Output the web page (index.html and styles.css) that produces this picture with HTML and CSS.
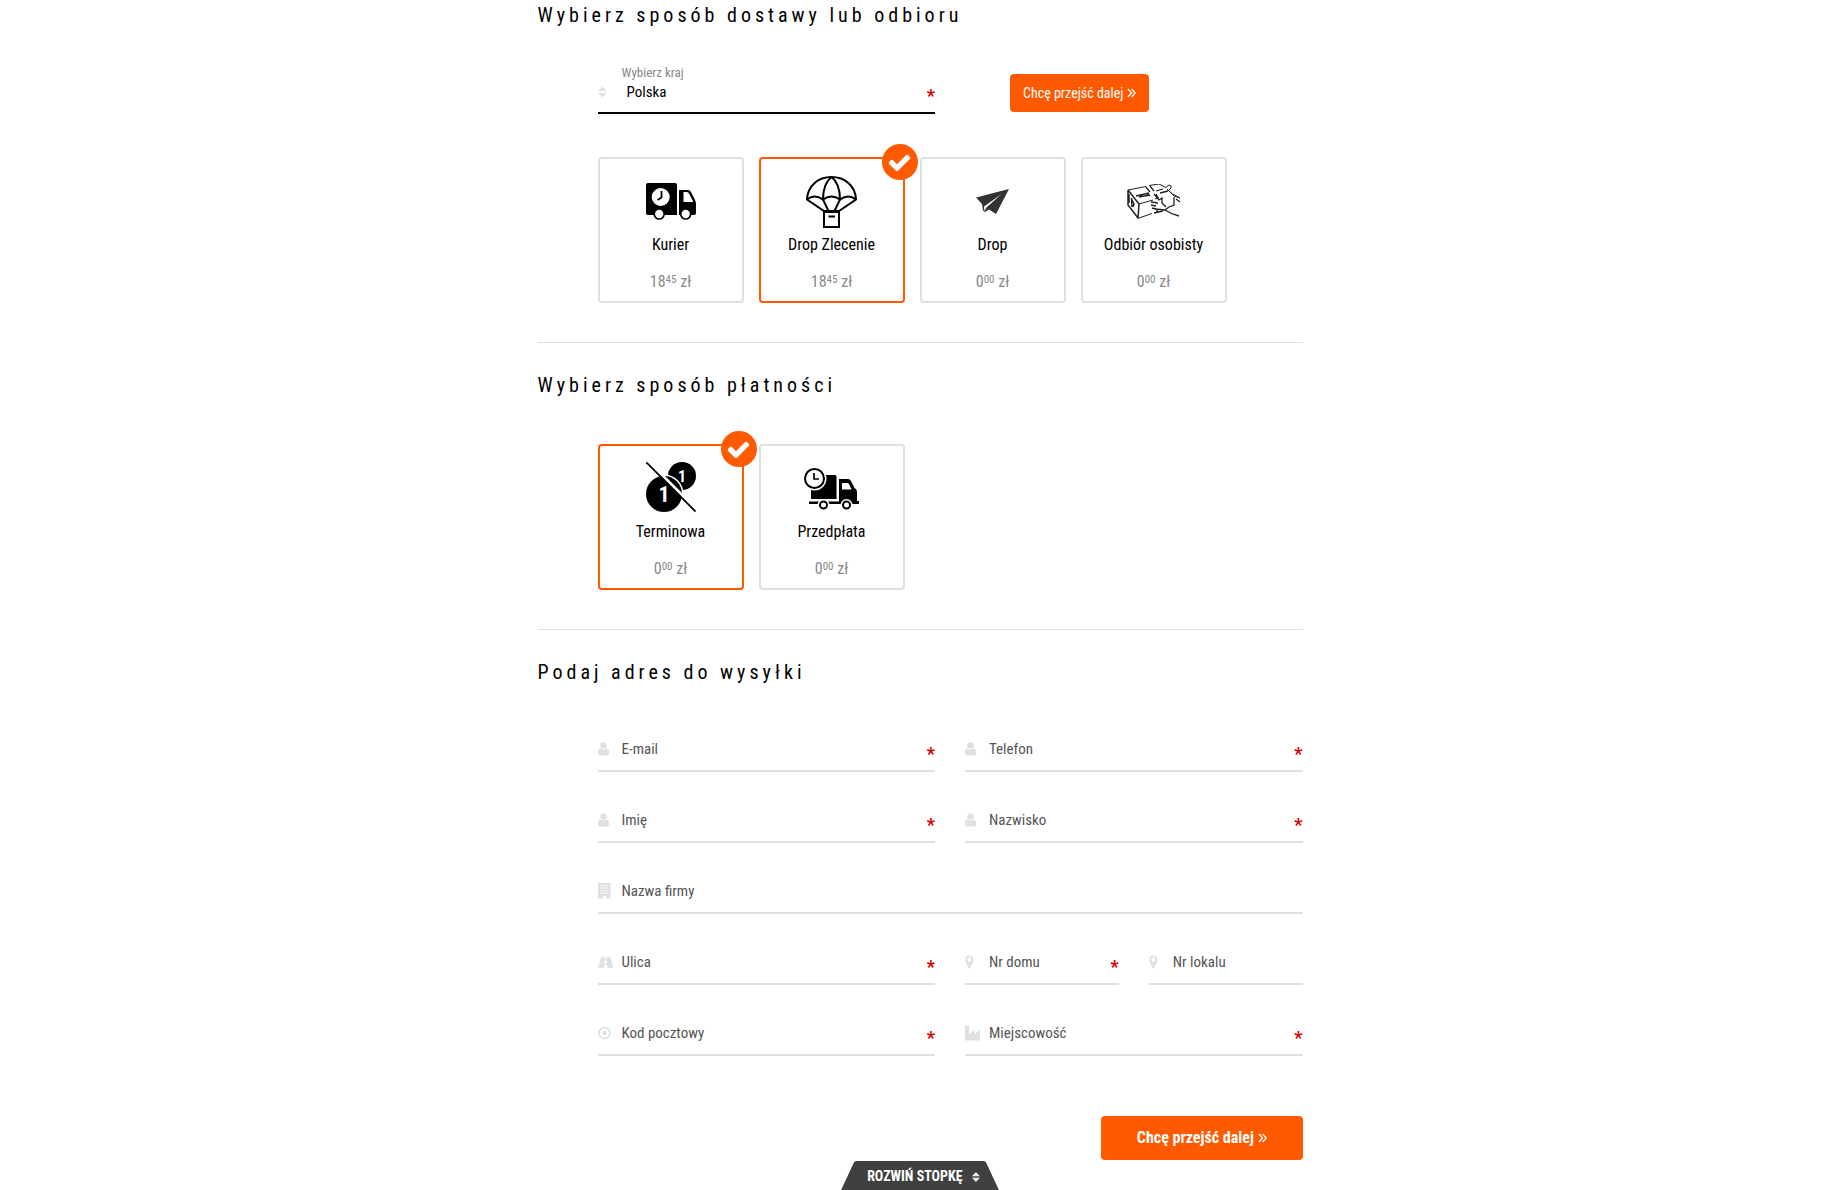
FILE: index.html
```
<!DOCTYPE html>
<html lang="pl">
<head>
  <meta charset="UTF-8">
  <meta name="viewport" content="width=device-width, initial-scale=1.0">
  <title>Zamówienie - dostawa i płatność</title>
  <link rel="stylesheet" href="styles.css">
</head>
<body>

  <!-- shared field icons -->
  <svg class="sprite" aria-hidden="true">
    <symbol id="i-user" viewBox="0 0 16 16"><path d="M2.200 4.500a3.300 3.300 0 1 1 6.600 0 3.300 3.300 0 0 1-6.600 0zM2.500 7.500q3 1.800 6 0 2.500.2 2.500 3.500v1q0 2.500-2 2.500H2q-2 0-2-2.500v-1q0-3.300 2.500-3.500z"/></symbol>
    <symbol id="i-sort" viewBox="0 0 16 16"><path d="M4.500 3L8.300 6.700H.7zM4.500 13L8.300 9.300H.7z" stroke="currentColor" stroke-width=".8" stroke-linejoin="round"/></symbol>
    <symbol id="i-building" viewBox="0 0 16 16"><path fill-rule="evenodd" d="M1 0h11q.5 0 .5.500v15H8v-2.500H5v2.500H0V.500Q0 0 .5 0zM2.500 2v1.200h1.200V2zm2.200 0v1.200h1.200V2zm2.200 0v1.200h1.200V2zm2.200 0v1.200h1.200V2zM2.500 4.500v1.200h1.200V4.500zm2.200 0v1.200h1.200V4.500zm2.200 0v1.200h1.200V4.500zm2.200 0v1.200h1.200V4.500zM2.500 7v1.200h1.200V7zm2.200 0v1.200h1.200V7zm2.200 0v1.200h1.200V7zm2.200 0v1.200h1.200V7zM2.500 9.500v1.200h1.200V9.500zm2.200 0v1.200h1.200V9.500zm2.200 0v1.200h1.200V9.500zm2.200 0v1.200h1.200V9.500z"/></symbol>
    <symbol id="i-road" viewBox="0 0 16 16"><path d="M3.800 3h3L6.600 5h2.200L8.600 3h3q.6 0 .8.600L15.400 13q.2.800-.5.800H9.300l-.2-3.300H6.300l-.2 3.300H.6q-.8 0-.5-.8L3 3.600Q3.200 3 3.800 3zM6.500 6.500l-.2 2.500h2.800L8.900 6.500z"/></symbol>
    <symbol id="i-target" viewBox="0 0 16 16"><circle cx="6.500" cy="8" r="5.500" fill="none" stroke="currentColor" stroke-width="1.600"/><circle cx="6.500" cy="8" r="2.200"/></symbol>
    <symbol id="i-marker" viewBox="0 0 16 16"><path fill-rule="evenodd" d="M4.300 1.500a4.200 4.200 0 0 1 4.200 4.200q0 1-.5 2L5.200 14q-.9 1.300-1.800 0L.6 7.700q-.5-1-.5-2a4.200 4.200 0 0 1 4.200-4.200zm0 2.100a2.100 2.100 0 1 0 0 4.200 2.100 2.100 0 0 0 0-4.200z"/></symbol>
    <symbol id="i-industry" viewBox="0 0 16 16"><path d="M0 .5h4v8.700l5.500-4.500v4.500L15 4.700v10.800H0z"/></symbol>
    <symbol id="i-angles" viewBox="0 0 9 12"><path d="M1 2l3.500 4L1 10M4.700 2l3.500 4-3.500 4" fill="none" stroke="currentColor" stroke-width="1.300"/></symbol>
    <symbol id="i-check" viewBox="0 0 1792 1792"><path d="M1671 566q0 40-28 68l-724 724-136 136q-28 28-68 28t-68-28l-136-136-362-362q-28-28-28-68t28-68l136-136q28-28 68-28t68 28l294 295 656-657q28-28 68-28t68 28l136 136q28 28 28 68z"/></symbol>
  </svg>

  <form class="order">

    <section class="step">
      <h2>Wybierz sposób dostawy lub odbioru</h2>
      <div class="country-row">
        <div class="country">
          <label for="kraj">Wybierz kraj</label>
          <div class="country-value">
            <svg class="field-icon"><use href="#i-sort"/></svg>
            <select id="kraj" name="kraj">
              <option>Polska</option>
              <option>Czechy</option>
              <option>Niemcy</option>
            </select>
            <span class="req">*</span>
          </div>
        </div>
        <button type="button" class="btn btn-small">Chcę przejść dalej <svg class="angles"><use href="#i-angles"/></svg></button>
      </div>

      <div class="cards">
        <label class="card">
          <input type="radio" name="dostawa" value="kurier">
          <span class="card-icon">
            <svg width="50" height="37" viewBox="0 0 50 37">
              <path d="M2 0h27q2 0 2 2v30H2q-2 0-2-2V2q0-2 2-2z"/>
              <circle cx="14.700" cy="14" r="9" fill="#fff"/>
              <path d="M15.500 8v6.500L11.500 17" fill="none" stroke="#000" stroke-width="1.800"/>
              <path fill-rule="evenodd" d="M33 7h9q2 0 3 2l4 8q1 2 1 4v9q0 2-2 2H33zm4.500 2v10H47q0-1-.6-2L43 10.500Q42.200 9 41 9z"/>
              <circle cx="13.200" cy="31" r="5" fill="#fff" stroke="#000" stroke-width="1.700"/>
              <circle cx="39.700" cy="31" r="5" fill="#fff" stroke="#000" stroke-width="1.700"/>
            </svg>
          </span>
          <span class="card-name">Kurier</span>
          <span class="card-price">18<sup>45</sup> zł</span>
          <svg class="badge" viewBox="0 0 36 36"><use href="#i-check" x="5" y="6" width="25" height="25"/></svg>
        </label>

        <label class="card">
          <input type="radio" name="dostawa" value="drop-zlecenie" checked>
          <span class="card-icon">
            <svg width="51" height="52" viewBox="0 0 51 52" fill="none" stroke="#000" stroke-width="2">
              <path d="M1 23.500C1.500 10 12 1 25.500 1S49.500 10 50 23.500L33 35H18z"/>
              <path d="M1 23.500q7.500-6 16 0 8.500-6 17 0 8.500-6 16 0"/>
              <path d="M25.500 1C19 6 17 14 17 23.500L22.500 35M25.500 1C32 6 34 14 34 23.500L28.500 35"/>
              <path d="M18 36h15v15H18zM22.500 40.500h6.500"/>
            </svg>
          </span>
          <span class="card-name">Drop Zlecenie</span>
          <span class="card-price">18<sup>45</sup> zł</span>
          <svg class="badge" viewBox="0 0 36 36"><use href="#i-check" x="5" y="6" width="25" height="25"/></svg>
        </label>

        <label class="card">
          <input type="radio" name="dostawa" value="drop">
          <span class="card-icon">
            <svg width="33" height="25" viewBox="0 0 33 25">
              <path fill="#333" d="M0 8.500L33 0 20 25l-7-4.500-4 2.500L7 21.500 6 15z"/>
              <path fill="#fff" d="M25 5.500L8 17.500l.5 4.500 2-3.500z"/>
            </svg>
          </span>
          <span class="card-name">Drop</span>
          <span class="card-price">0<sup>00</sup> zł</span>
          <svg class="badge" viewBox="0 0 36 36"><use href="#i-check" x="5" y="6" width="25" height="25"/></svg>
        </label>

        <label class="card">
          <input type="radio" name="dostawa" value="odbior">
          <span class="card-icon">
            <svg width="53" height="35" viewBox="0 0 53 35" fill="none" stroke="#222" stroke-width="1">
              <path d="M1 6v15l10 13 1-14L1 6M4.500 14l.5 9M5 16l2 4-1 3M2 10v9" stroke-width="1.500"/>
              <path d="M1 6l18-3.500M22 1.500L32 0l6 3M12 20l14-4M12 34l13-4.500M28 15l4-1.500M40 5l6 6"/>
              <path d="M9 12l13-3M12 13l11-2M13 11l3 2M19 9l4 3M19 3l4 5M23 2l4 5M33 9l8-2M29 7l7-2" stroke-width="1.300"/>
              <path d="M38 4l4-3q3 0 2 3l-3 3M42 7q3 2 5 5l6 2M46 10l7 4"/>
              <path d="M27 10l5 6 3-2v5l4 4M24 18l7 1M24 21l5 1M25 24l4 1M31 14l-2-4M27 29l9-2M30 26v3" stroke-width="1.300"/>
              <path d="M47 13v8l-5 2-4 3q6 4 14 6M49 15l4 3M28 25l10 1" stroke-width="1.300"/>
            </svg>
          </span>
          <span class="card-name">Odbiór osobisty</span>
          <span class="card-price">0<sup>00</sup> zł</span>
          <svg class="badge" viewBox="0 0 36 36"><use href="#i-check" x="5" y="6" width="25" height="25"/></svg>
        </label>
      </div>
    </section>

    <section class="step">
      <h2>Wybierz sposób płatności</h2>
      <div class="cards">
        <label class="card">
          <input type="radio" name="platnosc" value="terminowa" checked>
          <span class="card-icon">
            <svg class="coins" width="50" height="54" viewBox="0 0 50 54">
              <circle cx="36" cy="14" r="14"/>
              <circle cx="18" cy="32" r="19.500" fill="#fff"/>
              <circle cx="18" cy="32" r="18"/>
              <text x="36" y="20" font-size="16">1</text>
              <text x="18" y="40" font-size="22">1</text>
              <path d="M2 -1L51 48" stroke="#fff" stroke-width="3"/>
              <path d="M.5.500l49 49" stroke="#000" stroke-width="1.800"/>
            </svg>
          </span>
          <span class="card-name">Terminowa</span>
          <span class="card-price">0<sup>00</sup> zł</span>
          <svg class="badge" viewBox="0 0 36 36"><use href="#i-check" x="5" y="6" width="25" height="25"/></svg>
        </label>

        <label class="card">
          <input type="radio" name="platnosc" value="przedplata">
          <span class="card-icon">
            <svg width="55" height="42" viewBox="0 0 55 42">
              <path d="M7 7h24q1.500 0 1.500 1.500V31H7z"/>
              <circle cx="10.500" cy="10.500" r="12" fill="#fff"/>
              <circle cx="10.500" cy="10.500" r="9.500" fill="#fff" stroke="#000" stroke-width="2"/>
              <path d="M10 5v6h5" fill="none" stroke="#000" stroke-width="1.700"/>
              <path fill-rule="evenodd" d="M35 11h9q2 0 3 2l3.500 7q2.500 1 2.500 4v9h2v3H35zm3 4v6.500h9.500L45 16q-.5-1-2-1z"/>
              <path d="M5 33.500h30V36H5z"/>
              <circle cx="19.500" cy="37" r="6" fill="#fff"/>
              <circle cx="42.500" cy="37" r="6" fill="#fff"/>
              <circle cx="19.500" cy="37" r="3.500" fill="#fff" stroke="#000" stroke-width="2"/>
              <circle cx="42.500" cy="37" r="3.500" fill="#fff" stroke="#000" stroke-width="2"/>
            </svg>
          </span>
          <span class="card-name">Przedpłata</span>
          <span class="card-price">0<sup>00</sup> zł</span>
          <svg class="badge" viewBox="0 0 36 36"><use href="#i-check" x="5" y="6" width="25" height="25"/></svg>
        </label>
      </div>
    </section>

    <section class="step">
      <h2>Podaj adres do wysyłki</h2>
      <div class="address">
        <div class="field half">
          <svg class="field-icon"><use href="#i-user"/></svg>
          <label for="email">E-mail</label>
          <input type="email" id="email" name="email">
          <span class="req">*</span>
        </div>
        <div class="field half">
          <svg class="field-icon"><use href="#i-user"/></svg>
          <label for="telefon">Telefon</label>
          <input type="tel" id="telefon" name="telefon">
          <span class="req">*</span>
        </div>
        <div class="field half">
          <svg class="field-icon"><use href="#i-user"/></svg>
          <label for="imie">Imię</label>
          <input type="text" id="imie" name="imie">
          <span class="req">*</span>
        </div>
        <div class="field half">
          <svg class="field-icon"><use href="#i-user"/></svg>
          <label for="nazwisko">Nazwisko</label>
          <input type="text" id="nazwisko" name="nazwisko">
          <span class="req">*</span>
        </div>
        <div class="field full">
          <svg class="field-icon"><use href="#i-building"/></svg>
          <label for="firma">Nazwa firmy</label>
          <input type="text" id="firma" name="firma">
        </div>
        <div class="field half">
          <svg class="field-icon"><use href="#i-road"/></svg>
          <label for="ulica">Ulica</label>
          <input type="text" id="ulica" name="ulica">
          <span class="req">*</span>
        </div>
        <div class="field">
          <svg class="field-icon"><use href="#i-marker"/></svg>
          <label for="dom">Nr domu</label>
          <input type="text" id="dom" name="dom">
          <span class="req">*</span>
        </div>
        <div class="field">
          <svg class="field-icon"><use href="#i-marker"/></svg>
          <label for="lokal">Nr lokalu</label>
          <input type="text" id="lokal" name="lokal">
        </div>
        <div class="field half">
          <svg class="field-icon"><use href="#i-target"/></svg>
          <label for="kod">Kod pocztowy</label>
          <input type="text" id="kod" name="kod">
          <span class="req">*</span>
        </div>
        <div class="field half">
          <svg class="field-icon"><use href="#i-industry"/></svg>
          <label for="miasto">Miejscowość</label>
          <input type="text" id="miasto" name="miasto">
          <span class="req">*</span>
        </div>
      </div>
    </section>

    <div class="actions">
      <button type="submit" class="btn btn-big">Chcę przejść dalej <svg class="angles"><use href="#i-angles"/></svg></button>
    </div>

    <button type="button" class="footer-tab">ROZWIŃ STOPKĘ <svg class="tab-icon"><use href="#i-sort"/></svg></button>
  </form>

</body>
</html>
```
FILE: styles.css
```
* { box-sizing: border-box; margin: 0; padding: 0; }
body {
  background: #fff;
  color: #000;
  font-family: 'Roboto Condensed', Roboto, sans-serif;
  font-size: 15px; line-height: 20px;
}
button, input, select { font: inherit; color: inherit; border: 0; background: none; }
.sprite { display: none; }

.order { max-width: 768px; margin: 0 auto; padding-left: 3px; }

.step + .step { border-top: 1px solid #e0e0e0; margin-top: 39px; padding-top: 27px; }
h2 { font-size: 20px; font-weight: 400; line-height: 30px; letter-spacing: 4px; }

/* country */
.country-row {
  display: grid; grid-template-columns: 1fr 1fr; column-gap: 30px;
  align-items: end; margin: 35px 0 0 60px;
}
.country { border-bottom: 2px solid #000; padding-bottom: 10px; }
.country label { display: block; margin: 0 0 1px 24px; font-size: 13px; line-height: 16px; color: #888; }
.country-value { display: flex; align-items: center; }
.country select { flex: 1; height: 20px; padding-left: 5px; appearance: none; outline: 0; }

.field-icon { flex: none; width: 16px; height: 16px; margin-right: 8px; fill: #e0e0e0; color: #e0e0e0; }
.req { height: 20px; font-size: 18px; font-weight: 700; line-height: 28px; color: #d90000; }

/* buttons */
.btn { background: #ff5a00; color: #fff; border-radius: 4px; cursor: pointer; }
.btn-small { justify-self: start; height: 38px; margin: 0 0 2px 45px; padding: 0 13px; font-size: 14px; }
.btn-big { height: 44px; padding: 0 36px; font-size: 16px; font-weight: 700; }
.btn:hover { background: #e65100; }
.angles { width: 9px; height: 12px; vertical-align: -1px; }

/* delivery and payment cards */
.cards { display: flex; flex-wrap: wrap; gap: 15px; margin: 44px 0 0 60px; }
.country-row + .cards { margin-top: 43px; }
.card {
  position: relative; width: 146px; padding: 14px 0 9px;
  border: 2px solid #e0e0e0; border-radius: 4px;
  text-align: center; font-size: 16px; cursor: pointer;
}
.card input { position: absolute; opacity: 0; }
.card:has(input:checked) { border-color: #ff5a00; }
.card-icon { display: flex; align-items: center; justify-content: center; height: 57px; }
.card-name, .card-price { display: block; }
.card-name { margin: 5px 0 17px; }
.card-price { color: #888; }
.card-price sup { font-size: 11px; line-height: 0; vertical-align: 4px; }
.coins text { fill: #fff; font-weight: 700; text-anchor: middle; }
.badge {
  display: none; position: absolute; top: -15px; right: -15px;
  width: 36px; height: 36px; border-radius: 50%;
  background: #ff5a00; fill: #fff;
}
input:checked ~ .badge { display: block; }

/* address */
.address {
  display: grid; grid-template-columns: repeat(4, minmax(0, 1fr)); gap: 38px 30px;
  margin: 52px 0 0 60px;
}
.field { display: flex; align-items: center; padding-bottom: 11px; border-bottom: 2px solid #e0e0e0; color: #555; }
.field label { white-space: nowrap; }
.field input { flex: 1; min-width: 0; height: 20px; padding-left: 8px; outline: 0; }
.field .req { line-height: 30px; }
.half { grid-column: span 2; }
.full { grid-column: span 4; }

.actions { display: flex; justify-content: flex-end; margin-top: 60px; }

.footer-tab {
  display: block; height: 29px; margin: 1px auto 0; padding: 0 13px 0 26px;
  background: #404040; color: #fff; font-size: 14px; font-weight: 700; cursor: pointer;
  clip-path: polygon(13px 1px, 15px 0, calc(100% - 15px) 0, calc(100% - 13px) 1px, 100% 100%, 0 100%);
}
.tab-icon { width: 14px; height: 14px; margin-left: 6px; vertical-align: -3px; fill: #fff; }
```
